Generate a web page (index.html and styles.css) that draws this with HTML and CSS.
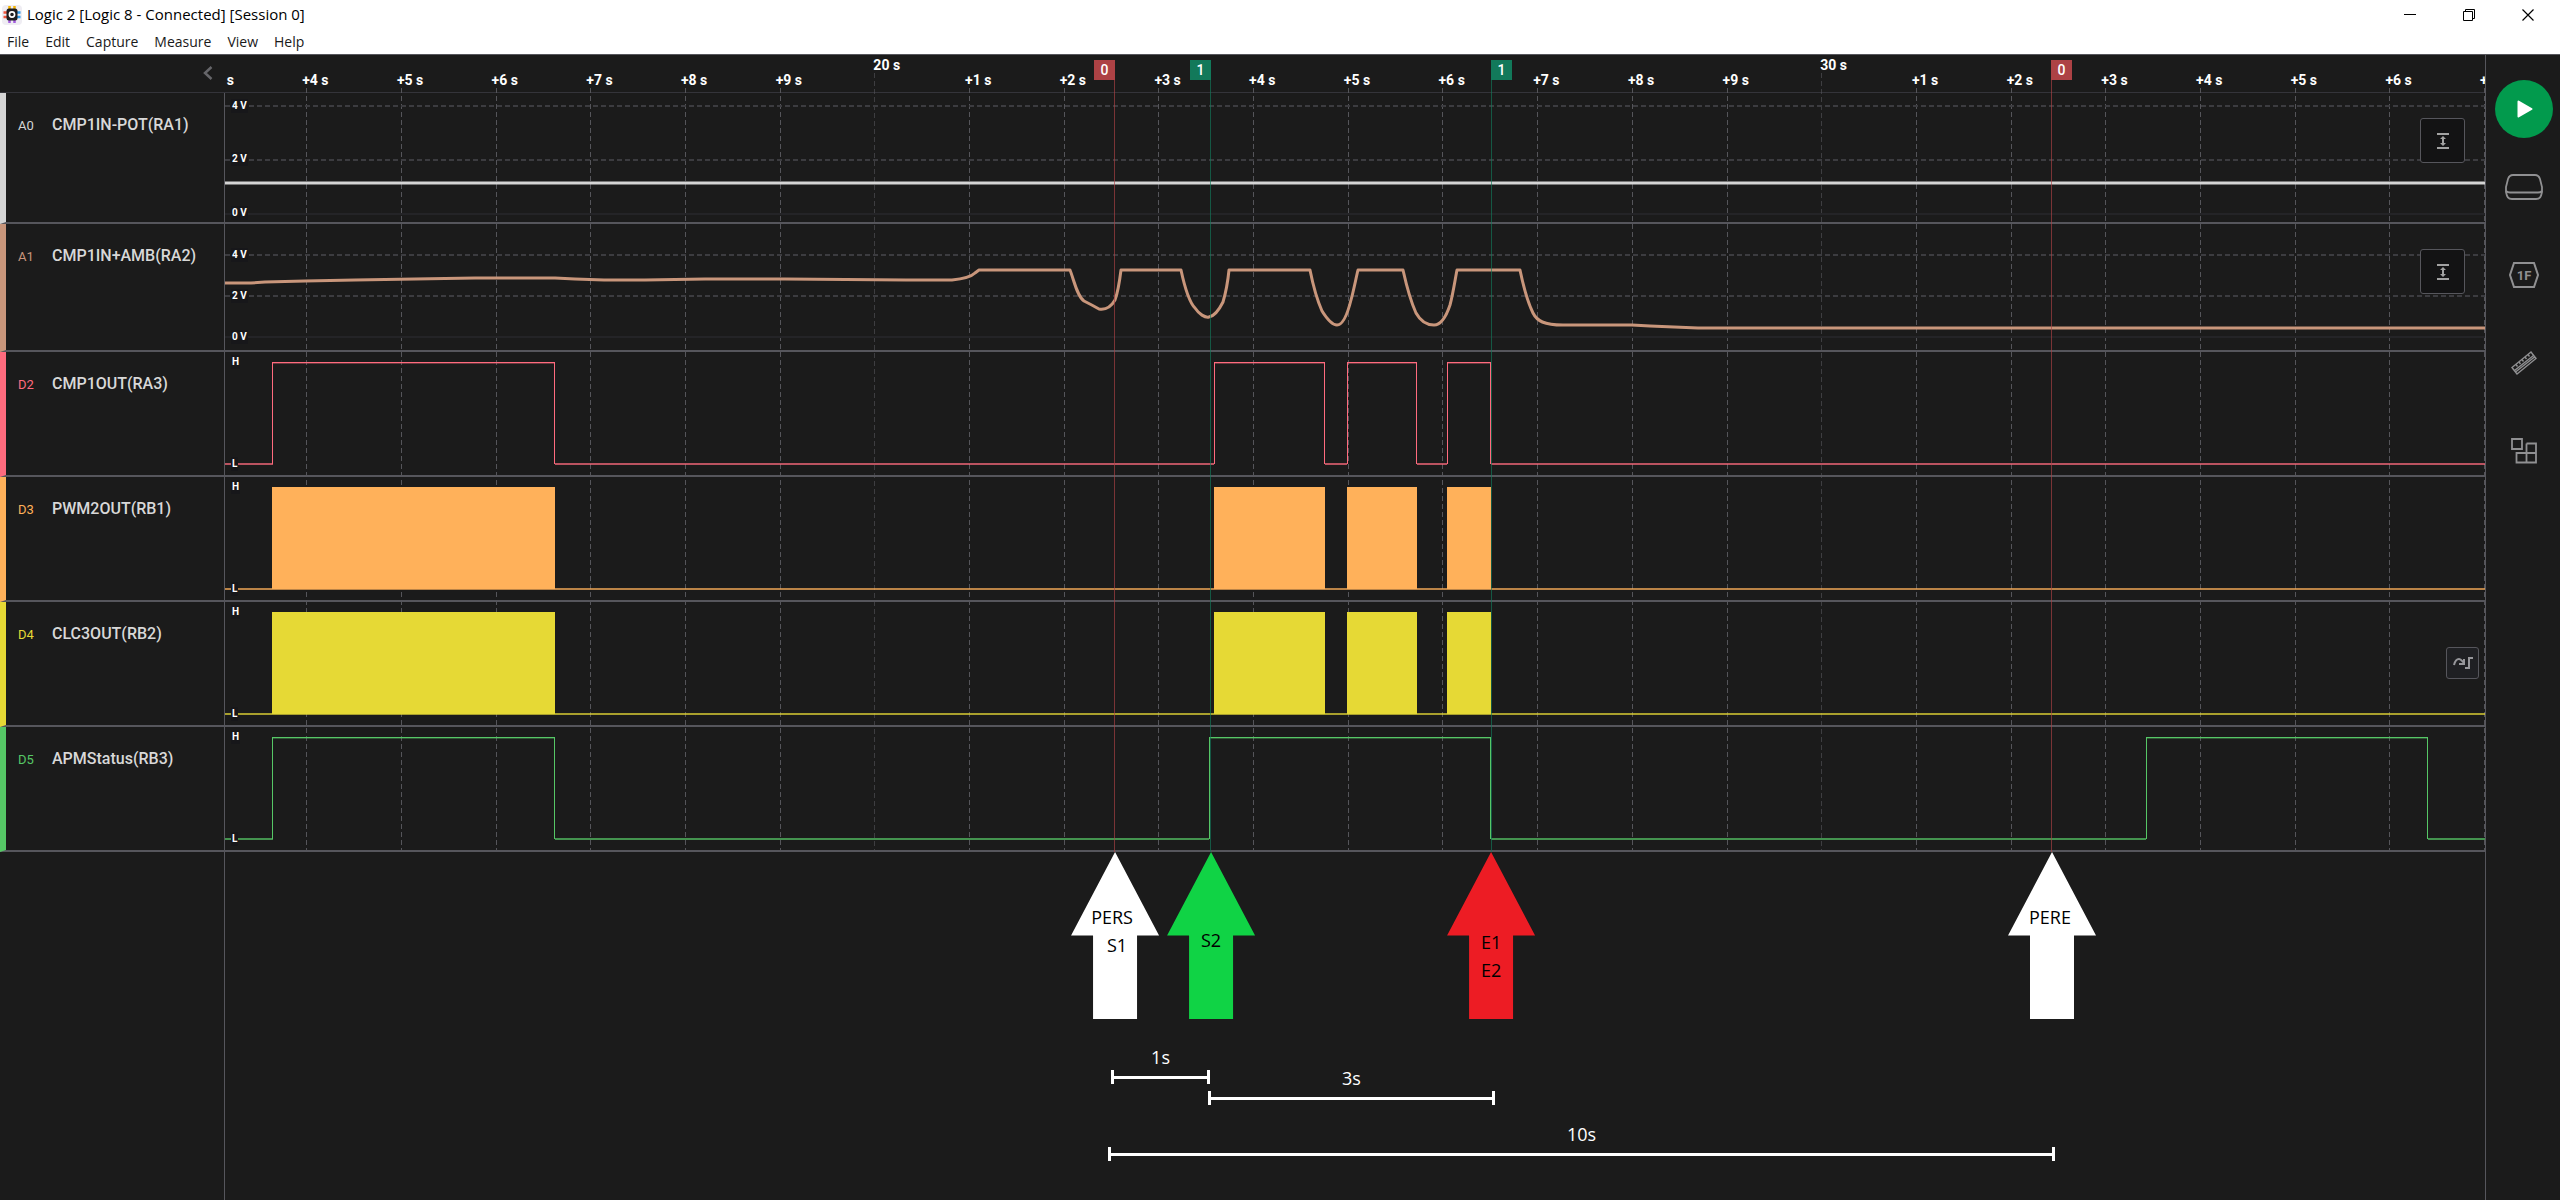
FILE: index.html
```html
<!DOCTYPE html>
<html lang="en">
<head>
<meta charset="utf-8">
<title>Logic 2 [Logic 8 - Connected] [Session 0]</title>
<link rel="stylesheet" href="styles.css">
</head>
<body>
<header class="titlebar">
  <svg class="app-icon" width="20" height="20" viewBox="0 0 20 20" aria-hidden="true">
    <rect x="0" y="0" width="20" height="20" rx="4" fill="#efedf3"/>
    <path d="M7.500 1v4M12.500 1v4" stroke="#f5b400" stroke-width="2.500"/>
    <path d="M7.500 14v4M12.500 14v4" stroke="#a45be0" stroke-width="2.500"/>
    <path d="M1.500 7.500h4M1.500 12h4" stroke="#f0563c" stroke-width="2.500"/>
    <path d="M14.500 7.500h4M14.500 12h4" stroke="#2f9be8" stroke-width="2.500"/>
    <rect x="4.500" y="3.500" width="11" height="12" rx="2.500" fill="#1d1d1f"/>
    <circle cx="10" cy="9.500" r="2.600" fill="#1d1d1f" stroke="#fff" stroke-width="1.600"/>
  </svg>
  <h1 class="title">Logic 2 [Logic 8 - Connected] [Session 0]</h1>
  <div class="window-controls">
    <button class="window-btn" type="button" aria-label="Minimize"><svg width="12" height="12"><path d="M0 5.500h12" stroke="#000"/></svg></button>
    <button class="window-btn" type="button" aria-label="Restore"><svg width="12" height="12" fill="none" stroke="#000"><path d="M.5 2.500h9v9h-9zM2.500 2.500v-2h9v9h-2"/></svg></button>
    <button class="window-btn" type="button" aria-label="Close"><svg width="12" height="12"><path d="M.5.5l11 11M11.500.5l-11 11" stroke="#000" stroke-width="1.200"/></svg></button>
  </div>
</header>
<nav class="menubar" aria-label="Application menu">
  <button class="menu-item" type="button">File</button>
  <button class="menu-item" type="button">Edit</button>
  <button class="menu-item" type="button">Capture</button>
  <button class="menu-item" type="button">Measure</button>
  <button class="menu-item" type="button">View</button>
  <button class="menu-item" type="button">Help</button>
</nav>

<div class="workspace">
  <main class="session">
    <div class="timeline">
      <ol class="axis">
        <li class="tick" style="--t:13">+3 s</li>
        <li class="tick" style="--t:14">+4 s</li>
        <li class="tick" style="--t:15">+5 s</li>
        <li class="tick" style="--t:16">+6 s</li>
        <li class="tick" style="--t:17">+7 s</li>
        <li class="tick" style="--t:18">+8 s</li>
        <li class="tick" style="--t:19">+9 s</li>
        <li class="tick tick-major" style="--t:20">20 s</li>
        <li class="tick" style="--t:21">+1 s</li>
        <li class="tick" style="--t:22">+2 s</li>
        <li class="tick" style="--t:23">+3 s</li>
        <li class="tick" style="--t:24">+4 s</li>
        <li class="tick" style="--t:25">+5 s</li>
        <li class="tick" style="--t:26">+6 s</li>
        <li class="tick" style="--t:27">+7 s</li>
        <li class="tick" style="--t:28">+8 s</li>
        <li class="tick" style="--t:29">+9 s</li>
        <li class="tick tick-major" style="--t:30">30 s</li>
        <li class="tick" style="--t:31">+1 s</li>
        <li class="tick" style="--t:32">+2 s</li>
        <li class="tick" style="--t:33">+3 s</li>
        <li class="tick" style="--t:34">+4 s</li>
        <li class="tick" style="--t:35">+5 s</li>
        <li class="tick" style="--t:36">+6 s</li>
        <li class="tick" style="--t:37">+7 s</li>
      </ol>

      <div class="ruler">
        <button class="collapse" type="button" aria-label="Collapse channel list"><svg width="10" height="14" fill="none" stroke="#66666a" stroke-width="2.500"><path d="M8.500 1L2 7l6.500 6"/></svg></button>
      </div>

      <section class="track track-a0">
        <div class="channel"><span class="channel-id">A0</span><span class="channel-name">CMP1IN-POT(RA1)</span></div>
        <div class="plot">
          <svg class="wave" viewBox="0 0 2260 129" preserveAspectRatio="none" aria-hidden="true">
            <path class="grid" d="M0 13H2260M0 67H2260"/><path class="zero" d="M0 121H2260"/>
            <path class="analog" d="M0 90H2260"/>
          </svg>
          <span class="level level-a0-4">4 V</span><span class="level level-a0-2">2 V</span><span class="level level-a0-0">0 V</span>
          <button class="fit" type="button" aria-label="Fit A0 vertically"><svg width="14" height="18" fill="none" stroke="#a2a2a2"><path d="M1 2h12M1 16h12" stroke-width="2"/><path d="M7 6v6" stroke-width="2"/><path d="M4 7l3-3 3 3zM4 11l3 3 3-3z" fill="#a2a2a2" stroke="none"/></svg></button>
        </div>
      </section>

      <section class="track track-a1">
        <div class="channel"><span class="channel-id">A1</span><span class="channel-name">CMP1IN+AMB(RA2)</span></div>
        <div class="plot">
          <svg class="wave" viewBox="0 0 2260 126" preserveAspectRatio="none" aria-hidden="true">
            <path class="grid" d="M0 31H2260M0 72H2260"/><path class="zero" d="M0 113H2260"/>
            <path class="analog" d="M0 59L26 59L40 58L80 57L130 56L190 55L250 54L330 54L350 55L379 56L420 56L480 55L560 55L681 56L700 56L727 56C737 55 746 53 750 49L754 46H845C849 56 852 72 859 77C865 80 867 81 874 85C880 86 886 83 890 76C893 68 895 54 896 46H956C959 60 964 78 970 84C974 90 980 94 984 93C990 92 994 86 998 78C1001 68 1003 56 1004 46H1085C1089 66 1093 78 1097 87C1102 95 1107 101 1112 101C1118 101 1123 88 1126 76C1129 65 1131 54 1133 46H1178C1182 64 1186 78 1191 89C1196 98 1203 101 1209 101C1216 101 1221 93 1225 81C1228 70 1230 56 1232 46H1295C1298 60 1301 75 1308 89C1312 97 1319 101 1338 101L1407 101L1425 102L1473 104L1560 104L2260 104"/>
          </svg>
          <span class="level level-a1-4">4 V</span><span class="level level-a1-2">2 V</span><span class="level level-a1-0">0 V</span>
          <button class="fit" type="button" aria-label="Fit A1 vertically"><svg width="14" height="18" fill="none" stroke="#a2a2a2"><path d="M1 2h12M1 16h12" stroke-width="2"/><path d="M7 6v6" stroke-width="2"/><path d="M4 7l3-3 3 3zM4 11l3 3 3-3z" fill="#a2a2a2" stroke="none"/></svg></button>
        </div>
      </section>

      <section class="track track-d2">
        <div class="channel"><span class="channel-id">D2</span><span class="channel-name">CMP1OUT(RA3)</span></div>
        <div class="plot">
          <svg class="wave" viewBox="0 0 2260 123" preserveAspectRatio="none" aria-hidden="true">
            <path class="low" d="M0 112H48M330 112H989M1100 112H1122M1192 112H1222M1266 112H2260"/>
            <path class="shade" d="M48 11.500H330M990 11.500H1099M1123 11.500H1191M1223 11.500H1265"/>
            <path class="pulse" d="M47.500 112V10.500H329.500V112M989.500 112V10.500H1099.500V112M1122.500 112V10.500H1191.500V112M1222.500 112V10.500H1265.500V112"/>
          </svg>
          <span class="level level-h">H</span><span class="level level-l">L</span>
        </div>
      </section>

      <section class="track track-d3">
        <div class="channel"><span class="channel-id">D3</span><span class="channel-name">PWM2OUT(RB1)</span></div>
        <div class="plot">
          <svg class="wave" viewBox="0 0 2260 123" preserveAspectRatio="none" aria-hidden="true">
            <path class="low" d="M0 112H2260"/>
            <path class="burst" d="M47 10H330V112H47zM989 10H1100V112H989zM1122 10H1192V112H1122zM1222 10H1266V112H1222z"/>
          </svg>
          <span class="level level-h">H</span><span class="level level-l">L</span>
        </div>
      </section>

      <section class="track track-d4">
        <div class="channel"><span class="channel-id">D4</span><span class="channel-name">CLC3OUT(RB2)</span></div>
        <div class="plot">
          <svg class="wave" viewBox="0 0 2260 123" preserveAspectRatio="none" aria-hidden="true">
            <path class="low" d="M0 112H2260"/>
            <path class="burst" d="M47 10H330V112H47zM989 10H1100V112H989zM1122 10H1192V112H1122zM1222 10H1266V112H1222z"/>
          </svg>
          <span class="level level-h">H</span><span class="level level-l">L</span>
          <button class="next-edge" type="button" aria-label="Jump to next edge"><svg width="20" height="14" fill="none" stroke="#97979b" stroke-width="2"><path d="M1 9C2 5 4 3 6 3c2 0 3 2 5 4"/><path d="M6 8h5V3"/><path d="M12 12h4V2h4"/></svg></button>
        </div>
      </section>

      <section class="track track-d5">
        <div class="channel"><span class="channel-id">D5</span><span class="channel-name">APMStatus(RB3)</span></div>
        <div class="plot">
          <svg class="wave" viewBox="0 0 2260 123" preserveAspectRatio="none" aria-hidden="true">
            <path class="low" d="M0 112H48M330 112H984M1266 112H1921M2203 112H2260"/>
            <path class="shade" d="M48 11.500H330M985 11.500H1265M1922 11.500H2202"/>
            <path class="pulse" d="M47.500 112V10.500H329.500V112M984.500 112V10.500H1265.500V112M1921.500 112V10.500H2202.500V112"/>
          </svg>
          <span class="level level-h">H</span><span class="level level-l">L</span>
        </div>
      </section>

      <div class="markers">
        <div class="marker marker-red marker-start" style="--t:22.531"><span class="flag">0</span></div>
        <div class="marker marker-green marker-start" style="--t:23.545"><span class="flag">1</span></div>
        <div class="marker marker-green" style="--t:26.513"><span class="flag">1</span></div>
        <div class="marker marker-red" style="--t:32.427"><span class="flag">0</span></div>
      </div>
    </div>

    <div class="notes">
      <div class="arrow arrow-white" style="--t:22.542"><span class="note-pers">PERS</span><span class="note-s1">S1</span></div>
      <div class="arrow arrow-green" style="--t:23.556"><span>S2</span></div>
      <div class="arrow arrow-red" style="--t:26.513"><span>E1</span><span>E2</span></div>
      <div class="arrow arrow-white" style="--t:32.437"><span class="note-pere">PERE</span></div>
      <div class="span span-1" style="--t:22.500;--d:1.045">1s</div>
      <div class="span span-3" style="--t:23.524;--d:3.03">3s</div>
      <div class="span span-10" style="--t:22.469;--d:10">10s</div>
    </div>
  </main>

  <aside class="tools" aria-label="Panels">
    <button class="start" type="button" aria-label="Start capture"><svg width="16" height="18"><path d="M1.500 1.500L14.500 9l-13 7.500z" fill="#fff" stroke="#fff" stroke-width="2" stroke-linejoin="round"/></svg></button>
    <button class="tool" type="button" aria-label="Device settings"><svg width="38" height="26" fill="none" stroke="#909092" stroke-width="1.800"><path d="M8 1h22c3 0 4 1 5 4l2 8v5c-1 5-2 7-6 7H7c-4 0-5-2-6-7v-5l2-8c1-3 2-4 5-4z"/><path d="M1 17c1 1 2 1.500 4 1.500h28c2 0 3-.5 4-1.500"/></svg></button>
    <button class="tool" type="button" aria-label="Analyzers"><svg width="30" height="26"><path d="M5 1h20l4 12-4 12H5L1 13z" fill="none" stroke="#909092" stroke-width="2"/><text x="15" y="18" class="tool-text">1F</text></svg></button>
    <button class="tool" type="button" aria-label="Measurements"><svg width="26" height="24" fill="none" stroke="#909092" stroke-width="1.400"><path d="M1 16.500L20 1l5 6.500L6 23zM3.500 19.500L22.500 4.500M4.500 21L23.500 6"/><path d="M5 13.500l1.500 2M8 11l1.500 2M11 8.500l1.500 2M14 6l1.500 2M17 3.500l1.500 2"/></svg></button>
    <button class="tool" type="button" aria-label="Extensions"><svg width="26" height="26" fill="none" stroke="#909092" stroke-width="1.800"><path d="M1 1h10v10H1zM15.500 5.500H25v19H5.500V15H25M15.500 5.500v19"/></svg></button>
  </aside>
</div>
</body>
</html>
```
FILE: styles.css
```css
:root {
  --bg: #1b1b1b;
  --rule: #56565c;
  --t-start: 13.1425;
  --t-span: 23.867;
  --header-w: 225px;
}

* { box-sizing: border-box; }

body {
  margin: 0;
  min-height: 100vh;
  display: flex;
  flex-direction: column;
  background: var(--bg);
  color: #d8d8d8;
  font-family: Roboto, sans-serif;
}

button {
  padding: 0;
  border: 0;
  background: none;
  color: inherit;
  font: inherit;
}

svg { display: block; }

/* Window chrome */
.titlebar {
  display: flex;
  align-items: center;
  height: 29px;
  padding-left: 2px;
  background: #fff;
  color: #000;
}

.title {
  flex: 1;
  margin: 0 0 0 5px;
  font: 400 15px/29px "Open Sans", sans-serif;
}

.window-controls {
  display: flex;
  gap: 13px;
  padding-right: 9px;
}

.window-btn {
  display: grid;
  place-items: center;
  width: 46px;
  height: 28px;
}

.menubar {
  display: flex;
  gap: 16px;
  height: 25px;
  padding-left: 7px;
  background: #fff;
  color: #1a1a1a;
  font: 400 14px/25px "Open Sans", sans-serif;
}

/* Workspace */
.workspace {
  flex: 1;
  display: flex;
  border-top: 1px solid var(--rule);
}

.session {
  flex: 1;
  min-width: 0;
  display: flex;
  flex-direction: column;
}

.timeline { position: relative; }

.axis,
.markers {
  position: absolute;
  inset: 0 0 0 var(--header-w);
  margin: 0;
  padding: 0;
  overflow: hidden;
  list-style: none;
}

.tick,
.marker,
.arrow,
.span {
  position: absolute;
  left: calc((var(--t) - var(--t-start)) / var(--t-span) * 100%);
}

.tick {
  top: 15px;
  bottom: 2px;
  margin-left: -4px;
  color: #fff;
  font-size: 14px;
  font-weight: 700;
  line-height: 20px;
  white-space: nowrap;
}

.tick::after {
  content: "";
  position: absolute;
  top: 18px;
  bottom: 0;
  left: 4px;
  width: 1px;
  background: repeating-linear-gradient(#55555a 0 5px, transparent 5px 8px);
}

.tick-major {
  top: 0;
  margin-left: -1px;
}

.tick-major::after {
  left: 1px;
  opacity: .6;
}

.markers { pointer-events: none; }

.marker {
  top: 5px;
  bottom: 0;
  width: 1px;
}

.marker::after {
  content: "";
  position: absolute;
  inset: 20px 0 0;
  background: var(--marker);
  opacity: .65;
}

.marker-red { --marker: #ad4245; }
.marker-green { --marker: #12795a; }

.flag {
  position: absolute;
  top: 0;
  left: 0;
  width: 21px;
  background: var(--marker);
  color: #fff;
  font-size: 14px;
  font-weight: 500;
  line-height: 20px;
  text-align: center;
}

.marker-start .flag {
  left: auto;
  right: 0;
}

.ruler {
  width: 100%;
  height: 38px;
  border-bottom: 1px solid #34343a;
}

.collapse {
  display: block;
  margin-left: 203px;
  padding-top: 11px;
}

/* Channels */
.track {
  position: relative;
  display: flex;
  height: 125px;
}

.track-a0 { --c: #d5d5d5; height: 131px; }
.track-a1 { --c: #c9967b; height: 128px; }
.track-d2 { --c: #ff6b7e; }
.track-d3 { --c: #ffb15a; }
.track-d4 { --c: #e6d935; }
.track-d5 { --c: #56c766; }

.channel {
  flex: none;
  display: flex;
  align-items: baseline;
  width: calc(var(--header-w) - 1px);
  padding: 21px 0 0 12px;
  border-left: 6px solid var(--c);
  border-bottom: 2px solid var(--rule);
}

.channel-id {
  width: 34px;
  color: var(--c);
  font-size: 13px;
}

.channel-name {
  font-size: 16px;
  font-weight: 500;
  line-height: 22px;
}

.plot {
  position: relative;
  flex: 1;
  min-width: 0;
  border-left: 1px solid var(--rule);
  border-bottom: 2px solid var(--rule);
}

.wave {
  width: 100%;
  height: 100%;
}

.wave path {
  fill: none;
  stroke: var(--c);
  vector-effect: non-scaling-stroke;
}

.wave .grid { stroke: #3c3c40; stroke-width: 2; stroke-dasharray: 5 3; shape-rendering: crispEdges; }
.wave .zero { stroke: #242427; stroke-width: 2; shape-rendering: crispEdges; }
.wave .analog { stroke-width: 3; stroke-linejoin: round; }
.wave .low { stroke-width: 2; opacity: .7; shape-rendering: crispEdges; }
.wave .shade { opacity: .35; shape-rendering: crispEdges; }
.wave .pulse { shape-rendering: crispEdges; }
.wave .burst { fill: var(--c); stroke: none; }

.level {
  position: absolute;
  left: 6px;
  padding: 0 1px;
  background: #17171a;
  color: #fff;
  font-size: 10px;
  font-weight: 700;
  line-height: 14px;
}

.level-a0-4 { top: 6px; }
.level-a0-2 { top: 59px; }
.level-a0-0 { top: 113px; }
.level-a1-4 { top: 24px; }
.level-a1-2 { top: 65px; }
.level-a1-0 { top: 106px; }
.level-h { top: 3px; }
.level-l { top: 105px; }

.fit,
.next-edge {
  position: absolute;
  display: grid;
  place-items: center;
  border: 1px solid #56565c;
  border-radius: 3px;
  background: #131314;
}

.fit {
  top: 25px;
  right: 20px;
  width: 45px;
  height: 45px;
}

.next-edge {
  top: 45px;
  right: 6px;
  width: 33px;
  height: 32px;
  background: #1f2023;
}

/* Annotations below the tracks */
.notes {
  position: relative;
  flex: 1;
  min-height: 340px;
  margin-left: calc(var(--header-w) - 1px);
  border-left: 1px solid var(--rule);
  color: #fff;
  font: 18px/28px "Open Sans", sans-serif;
}

.arrow {
  top: 0;
  width: 88px;
  height: 167px;
  margin-left: -44px;
  display: flex;
  flex-direction: column;
  align-items: center;
  background: var(--fill);
  clip-path: polygon(50% 0, 100% 50%, 75% 50%, 75% 100%, 25% 100%, 25% 50%, 0 50%);
  color: #000;
}

.arrow-white { --fill: #fff; padding-top: 51px; }
.arrow-green { --fill: #10d345; padding-top: 74px; }
.arrow-red { --fill: #ed1c24; padding-top: 76px; }
.note-pers { margin-right: 6px; }
.note-s1 { margin-left: 4px; }
.note-pere { margin-right: 4px; }

/* A duration: label on top, capped bar beneath */
.span {
  width: calc(var(--d) / var(--t-span) * 100%);
  text-align: center;
}

.span::before {
  content: "";
  position: absolute;
  inset: 27px 0 auto;
  height: 14px;
  border: solid #fff;
  border-width: 0 3px;
}

.span::after {
  content: "";
  position: absolute;
  inset: 33px 0 auto;
  height: 3px;
  background: #fff;
}

.span-1 { top: 191px; }
.span-3 { top: 212px; }
.span-10 { top: 268px; }

/* Right panel */
.tools {
  flex: none;
  display: flex;
  flex-direction: column;
  align-items: center;
  width: 75px;
  padding: 25px 0 0 1px;
  border-left: 1px solid var(--rule);
}

.start {
  display: grid;
  place-items: center;
  width: 58px;
  height: 58px;
  margin-bottom: 5px;
  padding-left: 3px;
  border-radius: 50%;
  background: #029a4d;
}

.tool {
  display: grid;
  place-items: center;
  width: 58px;
  height: 88px;
}

.tool-text {
  fill: #909092;
  font: 700 13px Roboto, sans-serif;
  text-anchor: middle;
}
```
